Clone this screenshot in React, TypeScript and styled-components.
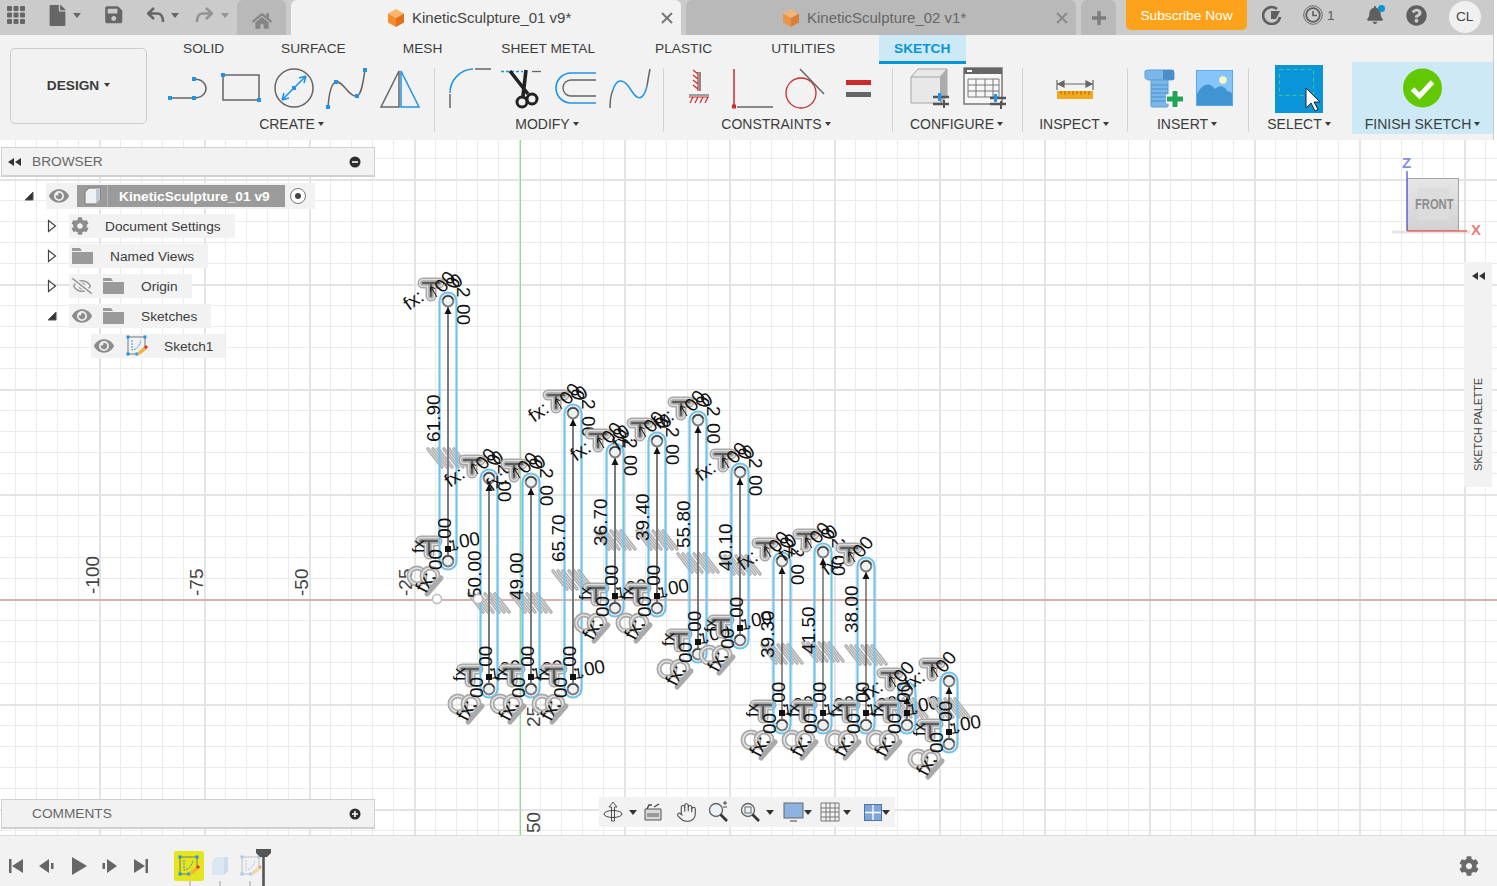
import React from "react";
import styled, { createGlobalStyle } from "styled-components";
import { FaBell, FaCog, FaEye, FaFile, FaHome, FaQuestionCircle, FaRegEyeSlash, FaSave } from "react-icons/fa";
import { Hand } from "lucide-react";

const FONT = `"Liberation Sans", Arial, sans-serif`;
const TEXT = "#3c3c3c";
const PANEL = "#f2f2f2";
const BLUE = "#1f94e8";
const GREY = "#666";
const RED = "#cc2b2b";

const GlobalStyle = createGlobalStyle`
  html, body { margin: 0; padding: 0; overflow: hidden; background: #fff; }
  body { font-family: ${FONT}; font-size: 13.7px; color: ${TEXT}; }
`;

const Shell = styled.div`
  width: 1497px;
  height: 886px;
  display: flex;
  flex-direction: column;
  overflow: hidden;
`;

/* top bar */
const TopBar = styled.div`
  height: 35px;
  width: 1494px;
  background: #cbcbcb;
  display: flex;
  flex: none;
`;
const Qat = styled.div`
  width: 237px;
  display: flex;
  align-items: center;
  padding-left: 7px;
  padding-bottom: 5px;
  box-sizing: border-box;
  color: ${GREY};
  flex: none;
`;
const QatItem = styled.span<{ $ml?: number; $fade?: boolean }>`
  display: flex;
  margin-left: ${(p) => p.$ml ?? 0}px;
  opacity: ${(p) => (p.$fade ? 0.55 : 1)};
`;
const Caret = styled.span<{ $ml?: number; $size?: number }>`
  display: inline-block;
  flex: none;
  margin-left: ${(p) => p.$ml ?? 0}px;
  border-left: ${(p) => p.$size ?? 4}px solid transparent;
  border-right: ${(p) => p.$size ?? 4}px solid transparent;
  border-top: ${(p) => (p.$size ?? 4) * 1.25}px solid currentColor;
`;
const HomeTab = styled.div`
  width: 49px;
  background: #b9b9b9;
  border-radius: 6px 6px 0 0;
  display: flex;
  align-items: center;
  justify-content: center;
  color: #858585;
  padding-top: 6px;
  box-sizing: border-box;
`;
const DocTab = styled.div<{ $active?: boolean }>`
  width: 390px;
  margin-left: 5px;
  background: ${(p) => (p.$active ? PANEL : "#b9b9b9")};
  color: ${(p) => (p.$active ? "#444" : "#666")};
  border-radius: 6px 6px 0 0;
  display: flex;
  align-items: center;
  padding: 0 7px 0 96px;
  box-sizing: border-box;
  font-size: 15px;
`;
const DocTitle = styled.span`
  margin-left: 7px;
  white-space: nowrap;
`;
const CloseX = styled.span`
  margin-left: auto;
  display: flex;
`;
const PlusTab = styled.div`
  width: 35px;
  margin-left: 5px;
  background: #b9b9b9;
  border-radius: 6px 6px 0 0;
  display: flex;
  align-items: center;
  justify-content: center;
`;
const Subscribe = styled.div`
  width: 121px;
  height: 30px;
  margin-left: 10px;
  background: #fda31b;
  border-radius: 0 0 5px 5px;
  color: #fff;
  display: flex;
  align-items: center;
  justify-content: center;
`;
const TopRight = styled.div`
  display: flex;
  align-items: center;
  padding-bottom: 5px;
  color: #5f5f5f;
`;
const TopIcon = styled.span<{ $ml: number }>`
  display: flex;
  margin-left: ${(p) => p.$ml}px;
  position: relative;
`;
const Badge = styled.span`
  position: absolute;
  top: -1px;
  right: -1px;
  width: 7px;
  height: 7px;
  border-radius: 50%;
  background: #0696d7;
`;
const Avatar = styled.div`
  width: 32px;
  height: 32px;
  margin-left: 22px;
  margin-bottom: -3px;
  border-radius: 50%;
  background: #f0f0f0;
  color: #444;
  display: flex;
  align-items: center;
  justify-content: center;
`;

/* ribbon */
const Ribbon = styled.div`
  height: 105px;
  width: 1494px;
  background: ${PANEL};
  display: flex;
  flex: none;
  border-right: 1px solid #ccc;
  box-sizing: border-box;
`;
const DesignCell = styled.div`
  width: 148px;
  flex: none;
  padding: 13px 0 0 10px;
  box-sizing: border-box;
`;
const DesignButton = styled.div`
  width: 137px;
  height: 76px;
  padding-bottom: 2px;
  box-sizing: border-box;
  border: 1px solid #ccc;
  border-radius: 5px;
  font-weight: bold;
  display: flex;
  align-items: center;
  justify-content: center;
  gap: 5px;
`;
const RibbonBody = styled.div`
  display: flex;
  flex-direction: column;
`;
const TabRow = styled.div`
  display: flex;
  height: 29px;
  padding-left: 6.5px;
`;
const RibbonTab = styled.div<{ $active?: boolean; $ml?: number }>`
  padding: 0 ${(p) => (p.$active ? 15.5 : 28.5)}px;
  margin-left: ${(p) => p.$ml ?? 0}px;
  display: flex;
  align-items: center;
  box-sizing: border-box;
  height: 29px;
  font-weight: ${(p) => (p.$active ? "bold" : "normal")};
  color: ${(p) => (p.$active ? "#0696d7" : TEXT)};
  background: ${(p) => (p.$active ? "#cde9f6" : "transparent")};
  border-bottom: 3px solid ${(p) => (p.$active ? "#0696d7" : "transparent")};
`;
const GroupRow = styled.div`
  display: flex;
  height: 76px;
  padding-left: 1px;
`;
const Group = styled.div<{ $w: number; $shift?: number; $lift?: number; $mr?: number }>`
  width: ${(p) => p.$w}px;
  margin-right: ${(p) => p.$mr ?? 0}px;
  flex: none;
  display: flex;
  flex-direction: column;
  align-items: center;
  padding-top: 2px;
  box-sizing: border-box;
  .icons {
    display: flex;
    gap: 9px;
    height: 44px;
    margin-left: ${(p) => p.$shift ?? 0}px;
    margin-top: ${(p) => -(p.$lift ?? 0)}px;
    margin-bottom: ${(p) => p.$lift ?? 0}px;
  }
`;
const GroupLabel = styled.div<{ $nudge?: number }>`
  margin-top: 6px;
  margin-left: ${(p) => p.$nudge ?? 0}px;
  height: 16px;
  line-height: 16px;
  font-size: 14px;
  display: flex;
  align-items: center;
  gap: 3px;
  white-space: nowrap;
`;
const Divider = styled.div`
  width: 1px;
  height: 64px;
  margin-top: 4px;
  background: #d4d4d4;
  flex: none;
`;
const FinishGroup = styled(Group)`
  background: #cde9f6;
  height: 72px;
  margin-top: -2px;
  padding-top: 4px;
`;

/* canvas */
const Canvas = styled.div`
  position: relative;
  height: 695px;
  flex: none;
  overflow: hidden;
  background-color: #fff;
  background-image:
    linear-gradient(to right, #e4e4e4 2px, transparent 2px),
    linear-gradient(to bottom, #e4e4e4 2px, transparent 2px),
    linear-gradient(to right, #ebebeb 1px, transparent 1px),
    linear-gradient(to bottom, #ebebeb 1px, transparent 1px);
  background-size: 105px 105px, 105px 105px, 21px 21px, 21px 21px;
  background-position: 99px 0, 0 39px, 15px 0, 0 18px;
`;
const SketchLayer = styled.svg`
  position: absolute;
  left: 0;
  top: 0;
  width: 1497px;
  height: 695px;
`;
const SvgText = styled.text`
  font-family: ${FONT};
  font-size: 19px;
  fill: #111;
`;
const AxisText = styled(SvgText)`
  fill: #444;
`;
const BrowserPanel = styled.div`
  position: absolute;
  left: 1px;
  top: 7px;
  width: 374px;
`;
const PanelHead = styled.div`
  height: 30px;
  box-sizing: border-box;
  background: ${PANEL};
  border: 1px solid #d0d0d0;
  border-bottom-width: 2px;
  display: flex;
  align-items: center;
  padding: 0 13px 0 6px;
  color: #666;
`;
const PanelTitle = styled.span<{ $ml: number }>`
  margin-left: ${(p) => p.$ml}px;
  flex: 1;
`;
const Tree = styled.div`
  margin-top: 4px;
`;
const Row = styled.div<{ $indent: number }>`
  height: 30px;
  display: flex;
  align-items: center;
  padding-left: ${(p) => p.$indent}px;
`;
const Toggle = styled.span<{ $w: number }>`
  width: ${(p) => p.$w}px;
  display: flex;
  flex: none;
`;
const Chip = styled.div<{ $pr?: number }>`
  height: 24px;
  background: ${PANEL};
  display: flex;
  align-items: center;
  padding: 0 ${(p) => p.$pr ?? 14}px 0 2px;
  color: ${TEXT};
  white-space: nowrap;
`;
const RootChip = styled(Chip)`
  height: 26px;
`;
const ChipIcon = styled.span<{ $ml?: number; $color?: string }>`
  display: flex;
  margin-left: ${(p) => p.$ml ?? 0}px;
  color: ${(p) => p.$color ?? "#8c8c8c"};
`;
const ChipLabel = styled.span<{ $ml: number }>`
  margin-left: ${(p) => p.$ml}px;
`;
const RootBlock = styled.div`
  width: 208px;
  height: 22px;
  margin-left: 8px;
  background: #9b9b9b;
  display: flex;
  align-items: center;
  color: #fff;
  font-weight: bold;
`;
const RootIcon = styled.span`
  width: 31px;
  height: 22px;
  display: flex;
  align-items: center;
  justify-content: center;
  border-right: 1px solid #b3b3b3;
  box-sizing: border-box;
`;
const RootName = styled.span`
  margin-left: 11px;
`;
const Radio = styled.span`
  width: 14px;
  height: 14px;
  margin-left: 5px;
  border: 1px solid #777;
  border-radius: 50%;
  background: #fff;
  display: flex;
  align-items: center;
  justify-content: center;
  &::after {
    content: "";
    width: 6px;
    height: 6px;
    border-radius: 50%;
    background: #444;
  }
`;
const CommentsPanel = styled(BrowserPanel)`
  top: auto;
  bottom: 6px;
`;
const NavBar = styled.div`
  position: absolute;
  left: 599px;
  bottom: 8px;
  width: 296px;
  height: 30px;
  background: ${PANEL};
  display: flex;
  align-items: center;
  padding-left: 3px;
  box-sizing: border-box;
  color: #333;
`;
const NavItem = styled.span<{ $ml?: number }>`
  display: flex;
  align-items: center;
  margin-left: ${(p) => p.$ml ?? 0}px;
`;
const Palette = styled.div`
  position: absolute;
  left: 1464px;
  top: 122px;
  width: 28px;
  height: 225px;
  background: ${PANEL};
  display: flex;
  flex-direction: column;
  align-items: center;
  padding: 10px 0 16px;
  box-sizing: border-box;
  justify-content: space-between;
`;
const PaletteLabel = styled.span`
  writing-mode: vertical-rl;
  transform: rotate(180deg);
  font-size: 11px;
  letter-spacing: -0.2px;
  white-space: nowrap;
  color: #444;
`;

/* timeline */
const Timeline = styled.div`
  height: 51px;
  flex: none;
  background: ${PANEL};
  border-top: 1px solid #dcdcdc;
  box-sizing: border-box;
  display: flex;
  align-items: center;
  padding: 10px 18px 0 6px;
  color: ${GREY};
`;
const PlayControl = styled.span`
  width: 31.3px;
  display: flex;
  flex: none;
`;
const Steps = styled.div`
  display: flex;
  align-items: center;
  margin-left: 11.5px;
  height: 30px;
  position: relative;
`;
const Step = styled.div<{ $active?: boolean; $fade?: boolean }>`
  width: 30px;
  height: 30px;
  margin-right: 1px;
  border-radius: 2px;
  background: ${(p) => (p.$active ? "#e5e51e" : "transparent")};
  opacity: ${(p) => (p.$fade ? 0.4 : 1)};
  display: flex;
  align-items: center;
  justify-content: center;
`;
const Playhead = styled.svg`
  position: absolute;
  left: 82px;
  top: -3px;
`;
const StepLink = styled.div`
  position: absolute;
  left: 15px;
  top: 30px;
  width: 58px;
  height: 5px;
  border: 2px solid #c8c8c8;
  border-top: 0;
  &::after {
    content: "";
    position: absolute;
    left: 28px;
    top: 0;
    width: 2px;
    height: 5px;
    background: #c8c8c8;
  }
`;
const TimelineGear = styled.span`
  margin-left: auto;
  display: flex;
  color: #6a6a6a;
`;

/* small drawings */
type IconProps = { children: React.ReactNode; w?: number; h?: number };
const Ico = ({ children, w = 44, h = 44 }: IconProps) => (
  <svg width={w} height={h} viewBox={`0 0 ${w} ${h}`} fill="none">
    {children}
  </svg>
);
const Pt = ({ x, y }: { x: number; y: number }) => <rect x={x - 2} y={y - 2} width={4} height={4} fill={BLUE} />;

const Cube = ({ fade = false }: { fade?: boolean }) => (
  <svg width={18} height={20} viewBox="0 0 18 20" style={{ opacity: fade ? 0.8 : 1 }}>
    <path d="M9 1 17 5.5 9 10 1 5.5Z" fill="#fbb56b" />
    <path d="M1 5.5 9 10V19L1 14.5Z" fill="#f58b2a" />
    <path d="M17 5.5 9 10V19L17 14.5Z" fill="#e0701a" />
  </svg>
);
const XMark = ({ color }: { color: string }) => (
  <svg width={14} height={14} viewBox="0 0 14 14">
    <path d="M2 2 12 12M12 2 2 12" stroke={color} strokeWidth="2" />
  </svg>
);
const SketchGlyph = ({ pencil = true }: { pencil?: boolean }) => (
  <svg width={22} height={22} viewBox="0 0 22 22" fill="none">
    <path d="M2 2H19V12M2 2V19H11" stroke="#777" strokeWidth="1" />
    <path d="M6 5V15C10 15 14 11 15 5" stroke="#3d8fd6" strokeWidth="1" strokeDasharray="2 1" />
    {[[2, 2], [19, 2], [2, 19], [11, 19]].map(([x, y]) => (
      <rect key={`${x}-${y}`} x={x - 1.5} y={y - 1.5} width={3} height={3} fill={BLUE} />
    ))}
    {pencil && <path d="M11 20 13 16 19 11 21 14 15 19Z" fill="#f2b33d" />}
    {pencil && <rect x={18.5} y={10.5} width={3} height={3} fill="#e03030" transform="rotate(40 20 12)" />}
  </svg>
);
const FolderGlyph = () => (
  <svg width={21} height={16} viewBox="0 0 21 16">
    <path d="M0 0H8L10 3H21V16H0Z" fill="#9a9a9a" />
    <path d="M0 3.5H21" stroke="#f2f2f2" strokeWidth="1" />
  </svg>
);
const TriOpen = () => (
  <svg width={10} height={10} viewBox="0 0 10 10">
    <path d="M9 1V9H1Z" fill="#333" stroke="#555" />
  </svg>
);
const TriClosed = () => (
  <svg width={10} height={14} viewBox="0 0 10 14">
    <path d="M1.5 1.5 8.5 7 1.5 12.5Z" fill="#fff" stroke="#444" strokeWidth="1.2" />
  </svg>
);
const DoubleLeft = () => (
  <svg width={13} height={8} viewBox="0 0 13 8">
    <path d="M6 0V8L0 4ZM13 0V8L7 4Z" fill="#333" />
  </svg>
);
const PanelDot = ({ plus }: { plus?: boolean }) => (
  <svg width={12} height={12} viewBox="0 0 12 12">
    <circle cx="6" cy="6" r="5.5" fill="#2e2e2e" />
    <path d={plus ? "M3 6H9M6 3V9" : "M3 6H9"} stroke="#fff" strokeWidth="1.6" />
  </svg>
);

/* sketch data */
type SlotSpec = {
  cx: number;
  top: number;
  bot: number;
  hatch: number;
  label?: string;
  ly?: number;
  two?: boolean;
  thin?: boolean;
};
const SLOTS: SlotSpec[] = [
  { cx: 448, top: 301, bot: 561, hatch: 458, label: "61.90", ly: 442, two: true },
  { cx: 489, top: 478, bot: 689, hatch: 603, label: "50.00", ly: 598, two: true },
  { cx: 531, top: 482, bot: 689, hatch: 603, label: "49.00", ly: 600, two: true },
  { cx: 573, top: 413, bot: 689, hatch: 580, label: "65.70", ly: 562, two: true },
  { cx: 615, top: 452, bot: 608, hatch: 540, label: "36.70", ly: 546, two: true },
  { cx: 657, top: 441, bot: 608, hatch: 540, label: "39.40", ly: 541, two: true },
  { cx: 698, top: 420, bot: 654, hatch: 563, label: "55.80", ly: 548, two: true },
  { cx: 740, top: 472, bot: 640, hatch: 565, label: "40.10", ly: 571, two: true },
  { cx: 782, top: 561, bot: 725, hatch: 654, label: "39.30", ly: 658, two: true, thin: true },
  { cx: 823, top: 552, bot: 725, hatch: 652, label: "41.50", ly: 654, two: true, thin: true },
  { cx: 866, top: 566, bot: 725, hatch: 655, label: "38.00", ly: 633, thin: true },
  { cx: 907, top: 691, bot: 725, hatch: 708, thin: true },
  { cx: 949, top: 681, bot: 744, hatch: 708, thin: true },
];

const Rot = ({ x, y, a, size, children }: { x: number; y: number; a: number; size?: number; children: string }) => (
  <SvgText transform={`translate(${x} ${y}) rotate(${a})`} style={size ? { fontSize: size } : undefined}>
    {children}
  </SvgText>
);

const TGlyph = ({ x, y }: { x: number; y: number }) => {
  const d = `M${x - 8} ${y - 5}H${x + 8}M${x} ${y - 5}V${y + 8}`;
  return (
    <g fill="none" strokeLinecap="round" strokeLinejoin="round">
      <path d={d} stroke="#a8a8a8" strokeWidth="11" />
      <path d={d} stroke="#e0e0e0" strokeWidth="8" />
      <path d={d} stroke="#a8a8a8" strokeWidth="5.4" />
      <path d={d} stroke="#5c5c5c" strokeWidth="2.2" />
    </g>
  );
};

const Hatch = ({ x, y }: { x: number; y: number }) => (
  <g fill="none" strokeLinecap="round">
    {[-5, 0, 5].map((o) => (
      <g key={o}>
        <path d={`M${x + o - 7} ${y - 9}L${x + o + 7} ${y + 9}`} stroke="#b0b0b0" strokeWidth="3.6" />
        <path d={`M${x + o - 7} ${y - 9}L${x + o + 7} ${y + 9}`} stroke="#dcdcdc" strokeWidth="1" />
      </g>
    ))}
  </g>
);

const DoubleRing = ({ x, y }: { x: number; y: number }) => (
  <g fill="none">
    <circle cx={x - 12} cy={y} r="8" stroke="#a8a8a8" strokeWidth="5" />
    <circle cx={x - 12} cy={y} r="8" stroke="#e4e4e4" strokeWidth="1.6" />
    <circle cx={x + 1} cy={y} r="8" stroke="#a8a8a8" strokeWidth="5" />
    <circle cx={x + 1} cy={y} r="8" stroke="#e4e4e4" strokeWidth="1.6" />
    <path d={`M${x + 12} ${y + 2}L${x - 2} ${y + 18}`} stroke="#aaa" strokeWidth="5" strokeLinecap="round" />
    <circle cx={x + 6} cy={y + 2} r="1" fill="#222" />
  </g>
);

const Node = ({ x, y }: { x: number; y: number }) => (
  <g>
    <circle cx={x} cy={y} r="5.4" fill="#eef1f2" stroke="#7d7d7d" strokeWidth="2" />
    <path d={`M${x - 5} ${y - 1.5}A5.4 5.4 0 0 1 ${x + 5} ${y - 1.5}`} fill="none" stroke="#3a3a3a" strokeWidth="1.3" />
  </g>
);

const Slot = ({ s }: { s: SlotSpec }) => {
  const { cx, top, bot } = s;
  const r = 8.5;
  return (
    <g>
      {/* constraint glyphs go under the geometry */}
      <Hatch x={cx - 8} y={s.hatch} />
      <Hatch x={cx + 8} y={s.hatch} />
      <TGlyph x={cx - 17} y={top - 13} />
      <TGlyph x={cx - 19} y={bot - 15} />
      <DoubleRing x={cx - 19} y={bot + 15} />
      <path
        d={`M${cx - r} ${top}A${r} ${r} 0 0 1 ${cx + r} ${top}V${bot}A${r} ${r} 0 0 1 ${cx - r} ${bot}Z`}
        fill="none"
        stroke="#6fc3ee"
        strokeWidth="2.2"
      />
      <path d={`M${cx} ${top + 5}V${bot - 5}`} stroke={s.thin ? "#222" : "#7a7a7a"} strokeWidth={s.thin ? 1 : 2} />
      <path d={`M${cx} ${top + 6}l3.5 7h-7Z`} fill="#111" />
      <rect x={cx - 3} y={bot - 15} width={6} height={6} fill="#111" />
      <Node x={cx} y={top} />
      <Node x={cx} y={bot} />
      <path d={`M${cx - 11} ${top - 4}L${cx - 17} ${top - 14}`} stroke="#111" strokeWidth="1" />
      <path d={`M${cx - 17} ${top - 14}l4 1.5M${cx - 17} ${top - 14}l-.5 4.5`} stroke="#111" strokeWidth="1" fill="none" />
      <Rot x={cx - 39} y={top + 10} a={-35}>fx:</Rot>
      <Rot x={cx - 5} y={top - 7} a={-50}>00</Rot>
      {s.two && <Rot x={cx + 7} y={top - 12} a={-30}>0</Rot>}
      {s.two && <Rot x={cx + 9} y={top - 11} a={-70}>0</Rot>}
      {s.two && <Rot x={cx + 9} y={top - 14} a={90}>2</Rot>}
      {s.two && <Rot x={cx + 9} y={top + 3} a={90}>00</Rot>}
      <Rot x={cx + 3} y={bot - 17} a={-90}>.00</Rot>
      <Rot x={cx - 24} y={bot - 8} a={-90} size={17}>fx</Rot>
      <Rot x={cx - 6} y={bot + 9} a={-90}>00</Rot>
      <Rot x={cx + 2} y={bot - 10} a={-8} size={15}>1</Rot>
      <Rot x={cx + 7} y={bot - 12} a={-10}>.00</Rot>
      <Rot x={cx - 22} y={bot + 33} a={-62}>fx:</Rot>
      {s.label && <Rot x={cx - 8} y={s.ly as number} a={-90}>{s.label}</Rot>}
    </g>
  );
};

const SketchDrawing = () => (
  <SketchLayer viewBox="0 140 1497 695">
    <path d="M0 600H1497" stroke="#c98080" strokeWidth="1" />
    <path d="M520.5 140V835" stroke="#93dc93" strokeWidth="1.2" />
    {[["-100", 99, 594], ["-75", 203, 596], ["-50", 308, 596], ["-25", 412, 596], ["25", 540, 727], ["50", 540, 833]].map(
      ([t, x, y]) => (
        <AxisText key={t as string} transform={`translate(${x} ${y}) rotate(-90)`}>
          {t}
        </AxisText>
      )
    )}
    {SLOTS.map((s) => (
      <Slot key={s.cx} s={s} />
    ))}
    <circle cx="437" cy="599" r="4.5" fill="#fff" stroke="#bbb" strokeWidth="1.5" />
    <circle cx="478" cy="599" r="4.5" fill="#fff" stroke="#bbb" strokeWidth="1.5" />
    {/* view cube */}
    <defs>
      <linearGradient id="cubeFace" x1="0" y1="0" x2="0" y2="1">
        <stop offset="0" stopColor="#e6e6e6" />
        <stop offset="1" stopColor="#d2d2d2" />
      </linearGradient>
    </defs>
    <path d="M1392 232H1470" stroke="#999" strokeWidth="3" opacity="0.25" />
    <rect x="1407.5" y="178.5" width="51" height="52" fill="url(#cubeFace)" stroke="#a5a5a5" />
    <rect x="1417" y="188" width="32" height="32" fill="#dcdcdc" />
    <AxisText
      transform="translate(1415 209) scale(.8 1)"
      style={{ fontSize: 14, fontWeight: "bold", fill: "#8d8d8d" }}
    >
      FRONT
    </AxisText>
    <path d="M1407 171V231" stroke="#6a6ae0" strokeWidth="1.5" />
    <path d="M1407 231H1467" stroke="#ee6a6a" strokeWidth="1.5" />
    <AxisText x="1402" y="168" style={{ fontSize: 15, fontWeight: "bold", fill: "#8a8aee" }}>Z</AxisText>
    <AxisText x="1471" y="235" style={{ fontSize: 15, fontWeight: "bold", fill: "#ee7a7a" }}>X</AxisText>
  </SketchLayer>
);

const Ribbon_Icons = {
  lineArc: (
    <Ico>
      <path d="M4 32H28M28 13C44 13 44 32 28 32" stroke={GREY} strokeWidth="1.5" />
      <Pt x={4} y={32} /><Pt x={28} y={32} /><Pt x={28} y={13} />
    </Ico>
  ),
  rect: (
    <Ico>
      <rect x="4" y="9" width="36" height="25" stroke={GREY} strokeWidth="1.5" />
      <Pt x={4} y={9} /><Pt x={40} y={34} />
    </Ico>
  ),
  circle: (
    <Ico>
      <circle cx="22" cy="22" r="19" stroke={GREY} strokeWidth="1.5" />
      <path d="M10 34 34 10M10 34l2-7M10 34l7-2M34 10l-7 2M34 10l-2 7" stroke={BLUE} strokeWidth="1.6" />
      <Pt x={22} y={22} />
    </Ico>
  ),
  spline: (
    <Ico>
      <path d="M3 41C4 28 6 17 11 16C18 14 24 32 32 30C37 28 38 15 40 4" stroke={GREY} strokeWidth="1.5" />
      <Pt x={3} y={41} /><Pt x={11} y={16} /><Pt x={32} y={30} /><Pt x={40} y={4} />
    </Ico>
  ),
  mirror: (
    <Ico>
      <path d="M21 5 3 41H21Z" stroke={GREY} strokeWidth="1.5" />
      <path d="M23 5 41 41H23Z" stroke={BLUE} strokeWidth="1.5" />
    </Ico>
  ),
  fillet: (
    <Ico>
      <path d="M2 42V28" stroke={GREY} strokeWidth="1.5" />
      <path d="M2 27A24 24 0 0 1 25 3" stroke={BLUE} strokeWidth="1.5" />
      <path d="M27 3H43" stroke={GREY} strokeWidth="1.5" />
    </Ico>
  ),
  trim: (
    <Ico>
      <path d="M0 5.5H22" stroke={BLUE} strokeWidth="1.3" strokeDasharray="3 2" />
      <path d="M31 5.5H40" stroke={GREY} strokeWidth="1.3" />
      <path d="M9 5 27 28M25 4 22 30" stroke="#222" strokeWidth="3.6" />
      <circle cx="31" cy="33" r="5" stroke="#222" strokeWidth="3" />
      <circle cx="21" cy="36" r="5" stroke="#222" strokeWidth="3" />
    </Ico>
  ),
  offset: (
    <Ico>
      <path d="M42 7H17A14.5 14.5 0 0 0 17 37H42" stroke={BLUE} strokeWidth="1.6" />
      <path d="M42 14H17A7.5 7.5 0 0 0 17 30H42" stroke={GREY} strokeWidth="1.4" />
    </Ico>
  ),
  splineBreak: (
    <Ico>
      <path d="M3 42C3 34 4 28 6 24" stroke={GREY} strokeWidth="1.5" />
      <path d="M6 24C10 10 18 14 24 24C30 34 36 36 40 20" stroke={BLUE} strokeWidth="1.5" />
      <path d="M40 20C41 14 42 8 43 3" stroke={GREY} strokeWidth="1.5" />
    </Ico>
  ),
  fix: (
    <Ico>
      <path d="M23 6V25" stroke={GREY} strokeWidth="1.5" />
      <path d="M21 6V25M21 8l-5-4M21 13l-5-4M21 18l-5-4M21 23l-5-4" stroke={RED} strokeWidth="1.2" />
      <path d="M12 29H32" stroke={GREY} strokeWidth="1.2" />
      <path d="M12 31H32M16 31l-3 6M21 31l-3 6M26 31l-3 6M31 31l-3 6" stroke={RED} strokeWidth="1.2" />
    </Ico>
  ),
  perp: (
    <Ico>
      <path d="M4 3V40" stroke={RED} strokeWidth="1.5" />
      <rect x="2" y="38.5" width="4" height="4" fill={RED} />
      <path d="M7 41H43" stroke={GREY} strokeWidth="1.5" />
    </Ico>
  ),
  tangent: (
    <Ico>
      <circle cx="18" cy="27" r="15" stroke={RED} strokeWidth="1.3" />
      <path d="M17 3 41 28" stroke={GREY} strokeWidth="1.5" />
    </Ico>
  ),
  equal: (
    <Ico>
      <rect x="10" y="14" width="25" height="5" fill={RED} />
      <rect x="10" y="26" width="25" height="5" fill={GREY} />
    </Ico>
  ),
  box: (
    <Ico>
      <g transform="translate(-2 0)">
        <path d="M4 11 11 3H40V30L34 37H4Z" fill="#e8e8e8" stroke="#a6a6a6" />
        <path d="M4 11H33L40 3" stroke="#a6a6a6" />
        <path d="M33 11H33.5L40 3V30L33.5 37H33Z" fill="#a9adb0" />
        <path d="M26 31H42M26 38H42" stroke="#555" strokeWidth="2.5" />
        <rect x="31" y="27" width="3" height="8" fill={BLUE} />
        <rect x="36" y="34" width="2" height="8" fill="#555" />
      </g>
    </Ico>
  ),
  table: (
    <Ico>
      <g transform="translate(1 0)">
        <rect x="1" y="2" width="38" height="36" fill="#f7f7f7" stroke="#666" strokeWidth="1.3" />
        <rect x="1" y="2" width="38" height="6" fill="#666" />
        <rect x="4" y="4" width="5" height="2" fill="#fff" />
        <path d="M5 13H36V31H5ZM5 19H36M5 25H36M13 13V31M22 13V31M30 13V31" stroke="#777" strokeWidth="1" />
        <path d="M27 32H43M27 38H43" stroke="#555" strokeWidth="2.5" />
        <rect x="31" y="28" width="3" height="8" fill={BLUE} />
        <rect x="37" y="35" width="2" height="8" fill="#555" />
      </g>
    </Ico>
  ),
  ruler: (
    <Ico>
      <path d="M4 14V24M40 14V24M5 18H39M5 18l6-3v6ZM39 18l-6-3v6Z" stroke="#666" strokeWidth="1.2" fill="#666" />
      <rect x="4" y="25" width="36" height="8" fill="#f6a81c" />
      <path d="M8 25v3M12 25v4M16 25v3M20 25v4M24 25v3M28 25v4M32 25v3M36 25v4" stroke="#a06a00" strokeWidth="1" />
    </Ico>
  ),
  bolt: (
    <Ico>
      <g transform="translate(2 0)">
        <path d="M3 5 6 4H30L32 6V13L30 14H6L3 12Z" fill="#79b8e8" stroke="#5d9fd6" />
        <rect x="21" y="4" width="11" height="10" fill="#4a8ec9" />
        <rect x="9" y="14" width="17" height="27" rx="1" fill="#79b8e8" stroke="#5d9fd6" />
        <path d="M9 19H26M9 23H26M9 27H26M9 31H26M9 35H26" stroke="#4f92cc" strokeWidth="1" />
        <path d="M24 33H41" stroke="#fff" strokeWidth="9" />
        <path d="M33 24V42" stroke="#fff" strokeWidth="9" />
        <path d="M25 33H41M33 25V41" stroke="#23a455" strokeWidth="5" />
      </g>
    </Ico>
  ),
  image: (
    <Ico>
      <rect x="3.5" y="4.5" width="36" height="35" fill="#86c5f9" stroke="#5da9e6" />
      <path d="M4 36V28C9 18 16 15 22 23C27 18 32 20 35 26C37 24 38 26 39 28V39H4Z" fill="#3f95d1" />
      <circle cx="30" cy="14" r="3.8" fill="#fbf6c2" />
    </Ico>
  ),
  select: (
    <Ico w={48} h={48}>
      <rect width="48" height="48" fill="#0a95d9" />
      <rect x="4.5" y="4.5" width="34" height="26" stroke="#3cc98e" strokeWidth="1" strokeDasharray="4 3" />
      <path d="M31 23V43L36 38 40 46 43 44.5 39 37H45Z" fill="#fff" stroke="#222" strokeWidth="1" />
    </Ico>
  ),
  finish: (
    <Ico>
      <circle cx="21.5" cy="22" r="19.5" fill="#62c900" />
      <path d="M11.5 23 18.5 30 31.5 16" stroke="#fff" strokeWidth="5" />
    </Ico>
  ),
};

const GROUPS: { name: string; w: number; shift?: number; nudge?: number; icons: (keyof typeof Ribbon_Icons)[] }[] = [
  { name: "CREATE", w: 285, shift: 4, icons: ["lineArc", "rect", "circle", "spline", "mirror"] },
  { name: "MODIFY", w: 228, nudge: -4, icons: ["fillet", "trim", "offset", "splineBreak"] },
  { name: "CONSTRAINTS", w: 228, nudge: -4, icons: ["fix", "perp", "tangent", "equal"] },
  { name: "CONFIGURE", w: 129, nudge: -2, icons: ["box", "table"] },
  { name: "INSPECT", w: 104, nudge: -2, icons: ["ruler"] },
  { name: "INSERT", w: 120, nudge: -2, icons: ["bolt", "image"] },
];

const TABS: { name: string; ml?: number }[] = [
  { name: "SOLID" },
  { name: "SURFACE" },
  { name: "MESH" },
  { name: "SHEET METAL", ml: 2 },
  { name: "PLASTIC", ml: 3 },
  { name: "UTILITIES", ml: 2 },
];

const TreeRows = () => (
  <Tree>
    <Row $indent={23}>
      <Toggle $w={22}><TriOpen /></Toggle>
      <RootChip $pr={9}>
        <ChipIcon $ml={1}><FaEye size={20} /></ChipIcon>
        <RootBlock>
          <RootIcon>
            <svg width={18} height={18} viewBox="0 0 18 18">
              <path d="M2 5 6 1H17V13L13 17H2Z" fill="#eef1f4" stroke="#777" />
              <path d="M13 1H17V13L13 17Z" fill="#c3c9d0" />
            </svg>
          </RootIcon>
          <RootName>KineticSculpture_01 v9</RootName>
        </RootBlock>
        <Radio />
      </RootChip>
    </Row>
    <Row $indent={46}>
      <Toggle $w={22}><TriClosed /></Toggle>
      <Chip>
        <ChipIcon><FaCog size={18} /></ChipIcon>
        <ChipLabel $ml={16}>Document Settings</ChipLabel>
      </Chip>
    </Row>
    <Row $indent={46}>
      <Toggle $w={22}><TriClosed /></Toggle>
      <Chip>
        <ChipIcon $ml={1}><FolderGlyph /></ChipIcon>
        <ChipLabel $ml={17}>Named Views</ChipLabel>
      </Chip>
    </Row>
    <Row $indent={46}>
      <Toggle $w={22}><TriClosed /></Toggle>
      <Chip>
        <ChipIcon $ml={1} $color="#999"><FaRegEyeSlash size={20} /></ChipIcon>
        <ChipIcon $ml={11}><FolderGlyph /></ChipIcon>
        <ChipLabel $ml={17}>Origin</ChipLabel>
      </Chip>
    </Row>
    <Row $indent={46}>
      <Toggle $w={22}><TriOpen /></Toggle>
      <Chip>
        <ChipIcon $ml={1}><FaEye size={20} /></ChipIcon>
        <ChipIcon $ml={11}><FolderGlyph /></ChipIcon>
        <ChipLabel $ml={17}>Sketches</ChipLabel>
      </Chip>
    </Row>
    <Row $indent={90}>
      <Chip $pr={12}>
        <ChipIcon $ml={1}><FaEye size={20} /></ChipIcon>
        <ChipIcon $ml={12}><SketchGlyph /></ChipIcon>
        <ChipLabel $ml={16}>Sketch1</ChipLabel>
      </Chip>
    </Row>
  </Tree>
);

const Lens = ({ plus }: { plus?: boolean }) => (
  <svg width={22} height={22} viewBox="0 0 22 22" fill="none">
    <circle cx="9" cy="9" r="6.5" fill="#eaf3f8" stroke="#666" strokeWidth="1.4" />
    {!plus && <rect x="6" y="6" width="6" height="6" stroke="#666" />}
    <path d="M13.5 13.5 20 20" stroke="#333" strokeWidth="2.6" />
    {plus && <path d="M16 2H20M18 0V4M16 6H20" stroke="#444" strokeWidth="1" />}
  </svg>
);

const NavTools = () => (
  <NavBar>
    <NavItem>
      <svg width={22} height={24} viewBox="0 0 22 24" fill="none">
        <path d="M11 2 7 7H9.5V21H12.5V7H15Z" fill="#eee" stroke="#555" />
        <ellipse cx="11" cy="14" rx="9" ry="3.5" stroke="#444" />
      </svg>
      <Caret $ml={5} />
    </NavItem>
    <NavItem $ml={6}>
      <svg width={20} height={20} viewBox="0 0 20 20" fill="none">
        <path d="M2 7H18V18H2Z" fill="#d8d8d8" stroke="#555" />
        <rect x="4" y="11" width="12" height="4" fill="#999" />
        <path d="M4 7 6 3H9M11 5 16 2" stroke="#444" strokeWidth="1.4" />
      </svg>
    </NavItem>
    <NavItem $ml={13}><Hand size={21} strokeWidth={1.2} color="#444" /></NavItem>
    <NavItem $ml={10}><Lens plus /></NavItem>
    <NavItem $ml={10}>
      <Lens />
      <Caret $ml={5} />
    </NavItem>
    <NavItem $ml={9}>
      <svg width={21} height={22} viewBox="0 0 21 22" fill="none">
        <rect x="1" y="2" width="19" height="15" fill="#8fb3e0" stroke="#666" />
        <path d="M7 20H14" stroke="#999" strokeWidth="2" />
      </svg>
      <Caret />
    </NavItem>
    <NavItem $ml={8}>
      <svg width={20} height={20} viewBox="0 0 20 20" fill="none">
        <path d="M1 1H19V19H1ZM1 6H19M1 10H19M1 15H19M6 1V19M10 1V19M15 1V19" stroke="#777" />
      </svg>
      <Caret $ml={3} />
    </NavItem>
    <NavItem $ml={13}>
      <svg width={18} height={17} viewBox="0 0 18 17">
        <rect x="0.5" y="0.5" width="17" height="16" fill="#7fa6d8" stroke="#4b72a8" />
        <path d="M9 1V16M1 8.5H17" stroke="#fff" strokeWidth="1.4" />
      </svg>
      <Caret />
    </NavItem>
  </NavBar>
);

const PLAY: { key: string; d: string }[] = [
  { key: "first", d: "M3 3H5.5V17H3ZM17 3V17L6 10Z" },
  { key: "prev", d: "M12 3V17L2 10ZM14 7H16.5V13H14Z" },
  { key: "play", d: "M3 1V19L18 10Z" },
  { key: "next", d: "M7 3V17L17 10ZM2.5 7H5V13H2.5Z" },
  { key: "last", d: "M3 3V17L14 10ZM14.5 3H17V17H14.5Z" },
];

export default function App() {
  return (
    <Shell>
      <GlobalStyle />
      <TopBar>
        <Qat>
          <QatItem>
            <svg width={18} height={18} viewBox="0 0 18 18" fill="#666">
              {[0, 6.5, 13].flatMap((y) =>
                [0, 6.5, 13].map((x) => <rect key={`${x}${y}`} x={x} y={y} width={5} height={5} rx={1} />)
              )}
            </svg>
          </QatItem>
          <QatItem $ml={22}><FaFile size={21} /></QatItem>
          <Caret $ml={5} />
          <QatItem $ml={23}><FaSave size={19.5} /></QatItem>
          <QatItem $ml={23.5}>
            <svg width={18} height={16} viewBox="0 0 18 16" fill="none">
              <path d="M7 1 1 6.5 7 12M1.5 6.5H10C14 6.5 16 9 16 15" stroke="#666" strokeWidth="2.6" />
            </svg>
          </QatItem>
          <Caret $ml={6} />
          <QatItem $ml={15.5} $fade>
            <svg width={18} height={16} viewBox="0 0 18 16" fill="none">
              <path d="M11 1 17 6.5 11 12M16.5 6.5H8C4 6.5 2 9 2 15" stroke="#666" strokeWidth="2.6" />
            </svg>
          </QatItem>
          <QatItem $ml={8} $fade><Caret /></QatItem>
        </Qat>
        <HomeTab><FaHome size={20} /></HomeTab>
        <DocTab $active>
          <Cube />
          <DocTitle>KineticSculpture_01 v9*</DocTitle>
          <CloseX><XMark color="#777" /></CloseX>
        </DocTab>
        <DocTab>
          <Cube fade />
          <DocTitle>KineticSculpture_02 v1*</DocTitle>
          <CloseX><XMark color="#8a8a8a" /></CloseX>
        </DocTab>
        <PlusTab>
          <svg width={16} height={16} viewBox="0 0 16 16">
            <path d="M8 1V15M1 8H15" stroke="#7d7d7d" strokeWidth="3.4" />
          </svg>
        </PlusTab>
        <Subscribe>Subscribe Now</Subscribe>
        <TopRight>
          <TopIcon $ml={15}>
            <svg width={20} height={20} viewBox="0 0 20 20" fill="none">
              <path d="M15 4A8.5 8.5 0 1 0 18 12" stroke="#5f5f5f" strokeWidth="2.6" />
              <path d="M9 6H18L14 14H9Z" fill="#5f5f5f" />
            </svg>
          </TopIcon>
          <TopIcon $ml={21}>
            <svg width={20} height={20} viewBox="0 0 20 20" fill="none">
              <circle cx="10" cy="10" r="9.3" stroke="#6a6a6a" strokeWidth="1" />
              <circle cx="10" cy="10" r="6.8" stroke="#5f5f5f" strokeWidth="1.8" />
              <path d="M10 6V10.5H14" stroke="#5f5f5f" strokeWidth="1.6" />
            </svg>
          </TopIcon>
          <TopIcon $ml={4}>1</TopIcon>
          <TopIcon $ml={31}>
            <FaBell size={18} />
            <Badge />
          </TopIcon>
          <TopIcon $ml={22}><FaQuestionCircle size={21} /></TopIcon>
          <Avatar>CL</Avatar>
        </TopRight>
      </TopBar>

      <Ribbon>
        <DesignCell>
          <DesignButton>
            DESIGN <Caret $size={3.5} />
          </DesignButton>
        </DesignCell>
        <RibbonBody>
          <TabRow>
            {TABS.map((t) => (
              <RibbonTab key={t.name} $ml={t.ml}>{t.name}</RibbonTab>
            ))}
            <RibbonTab $active $ml={15}>SKETCH</RibbonTab>
          </TabRow>
          <GroupRow>
            {GROUPS.map((g) => (
              <React.Fragment key={g.name}>
                <Group $w={g.w} $shift={g.shift}>
                  <div className="icons">
                    {g.icons.map((i) => (
                      <span key={i}>{Ribbon_Icons[i]}</span>
                    ))}
                  </div>
                  <GroupLabel $nudge={g.nudge}>
                    {g.name} <Caret $size={3.5} />
                  </GroupLabel>
                </Group>
                <Divider />
              </React.Fragment>
            ))}
            <Group $w={100} $mr={3} $lift={1}>
              <div className="icons">{Ribbon_Icons.select}</div>
              <GroupLabel>
                SELECT <Caret $size={3.5} />
              </GroupLabel>
            </Group>
            <FinishGroup $w={141}>
              <div className="icons">{Ribbon_Icons.finish}</div>
              <GroupLabel>
                FINISH SKETCH <Caret $size={3.5} />
              </GroupLabel>
            </FinishGroup>
          </GroupRow>
        </RibbonBody>
      </Ribbon>

      <Canvas>
        <SketchDrawing />
        <BrowserPanel>
          <PanelHead>
            <DoubleLeft />
            <PanelTitle $ml={11}>BROWSER</PanelTitle>
            <PanelDot />
          </PanelHead>
          <TreeRows />
        </BrowserPanel>
        <CommentsPanel>
          <PanelHead>
            <PanelTitle $ml={24}>COMMENTS</PanelTitle>
            <PanelDot plus />
          </PanelHead>
        </CommentsPanel>
        <NavTools />
        <Palette>
          <DoubleLeft />
          <PaletteLabel>SKETCH PALETTE</PaletteLabel>
        </Palette>
      </Canvas>

      <Timeline>
        {PLAY.map((p) => (
          <PlayControl key={p.key}>
            <svg width={20} height={20} viewBox="0 0 20 20">
              <path d={p.d} fill="#666" />
            </svg>
          </PlayControl>
        ))}
        <Steps>
          <StepLink />
          <Step $active><SketchGlyph /></Step>
          <Step $fade>
            <svg width={20} height={22} viewBox="0 0 20 22">
              <path d="M2 6 6 2H18V16L14 20H2Z" fill="#b9d8f0" />
              <path d="M14 2H18V16L14 20Z" fill="#8fbfe4" />
            </svg>
          </Step>
          <Step $fade><SketchGlyph /></Step>
          <Playhead width={16} height={38} viewBox="0 0 16 38">
            <path d="M0 1H15V5L11 9H4L0 5Z" fill="#555" />
            <path d="M7.5 9V38" stroke="#555" strokeWidth="2.6" />
          </Playhead>
        </Steps>
        <TimelineGear><FaCog size={20} /></TimelineGear>
      </Timeline>
    </Shell>
  );
}
